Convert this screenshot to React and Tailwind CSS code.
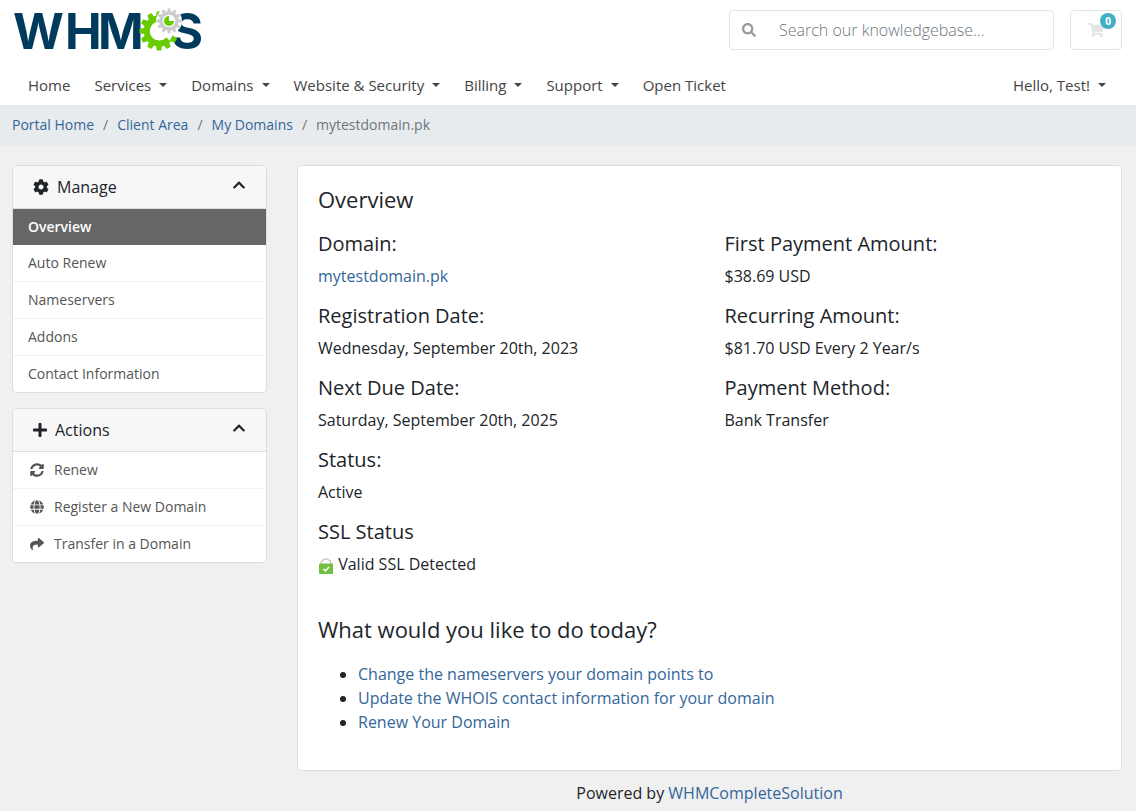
import React from "react";
import {
	FaSearch,
	FaShoppingCart,
	FaCog,
	FaPlus,
	FaChevronUp,
	FaSyncAlt,
	FaGlobe,
	FaShare,
} from "react-icons/fa";

const navItems = [
	{ label: "Home" },
	{ label: "Services", menu: true },
	{ label: "Domains", menu: true },
	{ label: "Website & Security", menu: true },
	{ label: "Billing", menu: true },
	{ label: "Support", menu: true },
	{ label: "Open Ticket" },
];

const breadcrumbs = ["Portal Home", "Client Area", "My Domains"];

const manageItems = [
	{ label: "Overview", active: true },
	{ label: "Auto Renew" },
	{ label: "Nameservers" },
	{ label: "Addons" },
	{ label: "Contact Information" },
];

const actionItems = [
	{ label: "Renew", icon: FaSyncAlt },
	{ label: "Register a New Domain", icon: FaGlobe },
	{ label: "Transfer in a Domain", icon: FaShare },
];

const tasks = [
	"Change the nameservers your domain points to",
	"Update the WHOIS contact information for your domain",
	"Renew Your Domain",
];

const teeth = (count) =>
	Array.from({ length: count }, (_, i) => (i * 360) / count);

const Logo = () => (
	<a href="#" aria-label="WHMCS">
		<svg
			width="200"
			height="62"
			viewBox="0 0 200 62"
			fill="#003a5d"
			fontFamily="Inter, sans-serif"
			fontWeight="700"
			fontSize="49"
		>
			<text x="1 53 86" y="49">
				WHM
			</text>
			<text x="159" y="49">
				S
			</text>
			<g transform="translate(147 31)">
				<path
					d="M9.5 8.5A12.5 12.5 0 1 1 0 -12.5"
					fill="none"
					stroke="#6c0"
					strokeWidth="6"
				/>
				{teeth(12)
					.filter((a) => a < 10 || a > 115)
					.map((a) => (
						<path
							key={a}
							d="M-3.2 -14L-2.2 -19.5H2.2L3.2 -14Z"
							fill="#6c0"
							transform={`rotate(${a})`}
						/>
					))}
			</g>
			<g transform="translate(157 21)">
				<circle r="13" fill="#fff" />
				<circle r="8" fill="none" stroke="#ccc" strokeWidth="3.5" />
				{teeth(12).map((a) => (
					<path
						key={a}
						d="M-1.8 -9L-1.2 -12.5H1.2L1.8 -9Z"
						fill="#ccc"
						transform={`rotate(${a})`}
					/>
				))}
				<path d="M0 -5A5 5 0 1 0 5 0L0 0Z" fill="#6c0" />
			</g>
		</svg>
	</a>
);

const Caret = () => (
	<span className="mb-1 ml-2 inline-block border-x-4 border-t-4 border-x-transparent border-t-current align-middle" />
);

const SidebarCard = ({ icon, title, children }) => (
	<section className="rounded border border-[#dedede] bg-white">
		<h3 className="flex h-[43px] items-center gap-2 rounded-t border-b border-[#dedede] bg-[#f7f7f7] px-5 text-base">
			{icon}
			<span className="flex-1">{title}</span>
			<button type="button" aria-label={`Collapse ${title}`}>
				<FaChevronUp className="mb-1 size-[14px]" />
			</button>
		</h3>
		<ul className="text-sm leading-5 text-[#555]">{children}</ul>
	</section>
);

const Detail = ({ label, children }) => (
	<div>
		<h4 className="mb-2 text-xl leading-6">{label}</h4>
		<div>{children}</div>
	</div>
);

const SslLock = () => (
	<svg
		width="16"
		height="16"
		viewBox="0 0 16 16"
		className="inline-block"
		aria-hidden="true"
	>
		<path
			d="M3 7V6a5 5 0 0 1 10 0V7"
			fill="none"
			stroke="#c8c8c8"
			strokeWidth="1.6"
		/>
		<rect x="1" y="5.5" width="14" height="10.5" rx="1" fill="#72bf44" />
		<path d="M5.5 11l2 2 3.5-4" fill="none" stroke="#fff" strokeWidth="1.5" />
	</svg>
);

const App = () => {
	return (
		<div className="min-h-screen bg-[#f0f0f0] font-['Open_Sans',sans-serif] text-base leading-6 text-[#212529]">
			<header className="bg-white">
				<div className="flex items-start justify-between pr-[14px] pl-3">
					<Logo />
					<div className="flex gap-4 pt-[10px]">
						<form className="flex h-10 w-[325px] items-center rounded border border-[#e4e4e4]">
							<button
								type="button"
								aria-label="Search"
								className="px-3 text-[#999]"
							>
								<FaSearch className="size-[14px]" />
							</button>
							<input
								type="text"
								aria-label="Search our knowledgebase"
								placeholder="Search our knowledgebase..."
								className="min-w-0 flex-1 px-[11px] font-light outline-none placeholder:text-[#6c757d]"
							/>
						</form>
						<a
							href="#"
							aria-label="Shopping cart"
							className="relative flex h-10 w-[52px] items-center justify-center rounded border border-[#e4e4e4] text-[#e4e4e4]"
						>
							<FaShoppingCart className="size-4" />
							<span className="absolute top-[2px] right-[5px] flex size-4 items-center justify-center rounded-full bg-[#41b0c4] text-[10px] font-bold text-white">
								0
							</span>
						</a>
					</div>
				</div>
				<nav className="flex items-center justify-between pt-3 pr-[30px] pb-2 pl-7 text-[15px] leading-[23px] text-[#444]">
					<ul className="flex gap-6">
						{navItems.map((item) => (
							<li key={item.label}>
								<a href="#">
									{item.label}
									{item.menu && <Caret />}
								</a>
							</li>
						))}
					</ul>
					<a href="#">
						Hello, Test!
						<Caret />
					</a>
				</nav>
			</header>

			<nav aria-label="breadcrumb" className="bg-[#e8ebee] px-3 py-2">
				<ol className="flex text-sm leading-6">
					{breadcrumbs.map((crumb) => (
						<li key={crumb} className="flex text-[#6c757d]">
							<a href="#" className="text-[#336699]">
								{crumb}
							</a>
							<span className="px-[9px]">/</span>
						</li>
					))}
					<li className="text-[#6c757d]">mytestdomain.pk</li>
				</ol>
			</nav>

			<div className="grid grid-cols-[255px_1fr] gap-[30px] pt-5 pr-[14px] pl-3">
				<aside className="flex flex-col gap-[15px]">
					<SidebarCard icon={<FaCog className="size-4" />} title="Manage">
						{manageItems.map((item) => (
							<li
								key={item.label}
								className={
									item.active
										? "bg-[#666] font-semibold text-white"
										: "border-b border-[#f1f1f1] last:border-b-0"
								}
							>
								<a href="#" className="block px-[15px] py-2">
									{item.label}
								</a>
							</li>
						))}
					</SidebarCard>
					<SidebarCard
						icon={<FaPlus className="h-4 w-[14px]" />}
						title="Actions"
					>
						{actionItems.map(({ label, icon: Icon }) => (
							<li
								key={label}
								className="border-b border-[#f1f1f1] last:border-b-0"
							>
								<a href="#" className="flex items-center gap-[10px] px-[17px] py-2">
									<Icon className="size-[14px]" />
									{label}
								</a>
							</li>
						))}
					</SidebarCard>
				</aside>

				<div>
					<main className="rounded border border-[#dedede] bg-white px-5 pt-5 pb-9">
						<h3 className="mb-5 text-[22px] leading-[26px]">Overview</h3>
						<div className="grid grid-cols-2 gap-x-[30px] gap-y-4">
							<Detail label="Domain:">
								<a href="#" className="text-[#336699]">
									mytestdomain.pk
								</a>
							</Detail>
							<Detail label="First Payment Amount:">$38.69 USD</Detail>
							<Detail label="Registration Date:">
								Wednesday, September 20th, 2023
							</Detail>
							<Detail label="Recurring Amount:">
								$81.70 USD Every 2 Year/s
							</Detail>
							<Detail label="Next Due Date:">
								Saturday, September 20th, 2025
							</Detail>
							<Detail label="Payment Method:">Bank Transfer</Detail>
							<div className="col-span-2">
								<Detail label="Status:">Active</Detail>
							</div>
							<div className="col-span-2">
								<Detail label="SSL Status">
									<SslLock /> Valid SSL Detected
								</Detail>
							</div>
						</div>
						<h3 className="mt-10 mb-5 text-[22px] leading-[26px]">
							What would you like to do today?
						</h3>
						<ul className="list-disc pl-10">
							{tasks.map((task) => (
								<li key={task}>
									<a href="#" className="text-[#336699]">
										{task}
									</a>
								</li>
							))}
						</ul>
					</main>
					<footer className="py-[10px] text-center">
						Powered by{" "}
						<a href="#" className="text-[#336699]">
							WHMCompleteSolution
						</a>
					</footer>
				</div>
			</div>
		</div>
	);
};

export default App;
